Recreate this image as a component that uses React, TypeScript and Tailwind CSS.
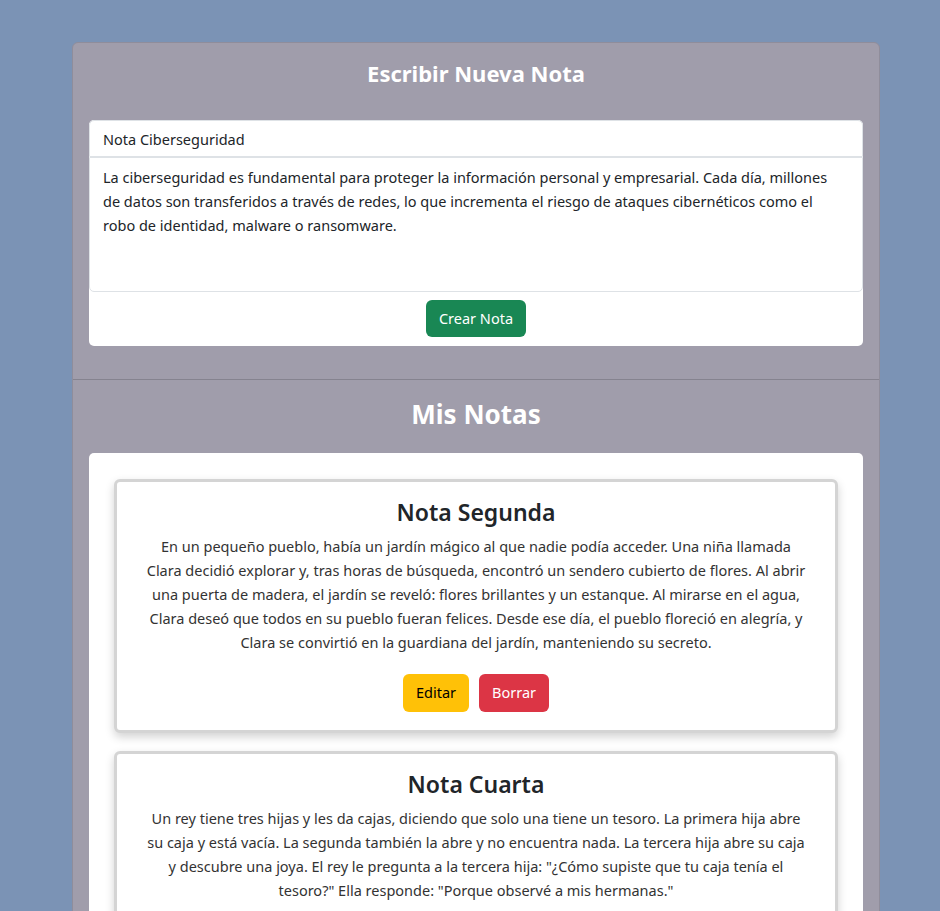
import { useState } from "react";

type Note = { id: number; title: string; lines: string[] };

const notes: Note[] = [
  {
    id: 2,
    title: "Nota Segunda",
    lines: [
      "En un pequeño pueblo, había un jardín mágico al que nadie podía acceder. Una niña llamada",
      "Clara decidió explorar y, tras horas de búsqueda, encontró un sendero cubierto de flores. Al abrir",
      "una puerta de madera, el jardín se reveló: flores brillantes y un estanque. Al mirarse en el agua,",
      "Clara deseó que todos en su pueblo fueran felices. Desde ese día, el pueblo floreció en alegría, y",
      "Clara se convirtió en la guardiana del jardín, manteniendo su secreto.",
    ],
  },
  {
    id: 4,
    title: "Nota Cuarta",
    lines: [
      "Un rey tiene tres hijas y les da cajas, diciendo que solo una tiene un tesoro. La primera hija abre",
      "su caja y está vacía. La segunda también la abre y no encuentra nada. La tercera hija abre su caja",
      'y descubre una joya. El rey le pregunta a la tercera hija: "¿Cómo supiste que tu caja tenía el',
      'tesoro?" Ella responde: "Porque observé a mis hermanas."',
    ],
  },
];

export default function App() {
  const [title, setTitle] = useState("Nota Ciberseguridad");
  const [body, setBody] = useState(
    "La ciberseguridad es fundamental para proteger la información personal y empresarial. Cada día, millones\nde datos son transferidos a través de redes, lo que incrementa el riesgo de ataques cibernéticos como el\nrobo de identidad, malware o ransomware."
  );

  return (
    <div className="min-h-screen bg-[#7b93b5] pt-[42px] font-['Noto_Sans',sans-serif] text-[#212529]">
      <div className="ml-[72px] w-[808px] rounded-t-[6px] border border-[#8f8d9b] bg-[#a09dab]">
        {/* Formulario */}
        <section className="px-4 pt-[14px] pb-[33px]">
          <h2 className="mb-[31px] text-center text-[22px] leading-8 font-bold text-white">
            Escribir Nueva Nota
          </h2>
          <div className="flex flex-col items-center rounded-[5px] bg-white pb-[9px]">
            <input
              value={title}
              onChange={(e) => setTitle(e.target.value)}
              className="h-[37px] w-full rounded-t-[5px] border border-[#dee2e6] px-[13px] text-[14.5px] outline-none"
            />
            <textarea
              value={body}
              wrap="off"
              onChange={(e) => setBody(e.target.value)}
              className="h-[135px] w-full resize-none overflow-hidden rounded-b-[5px] border border-[#dee2e6] px-[13px] py-[7px] text-[14.5px] leading-6 outline-none"
            />
            <button className="mt-[8px] h-[37px] rounded-[6px] bg-[#198754] px-[13px] text-[14.5px] text-white">
              Crear Nota
            </button>
          </div>
        </section>

        {/* Lista de notas */}
        <section className="border-t border-[#85838f] px-4 pt-[16px]">
          <h2 className="mb-[21px] text-center text-[26px] leading-9 font-bold text-white">
            Mis Notas
          </h2>
          <div className="flex flex-col gap-[18px] rounded-[5px] bg-white px-[25px] pt-[26px] pb-6">
            {notes.map((note) => (
              <div
                key={note.id}
                className="rounded-[6px] border-[3px] border-[#d4d4d4] bg-white px-3 pt-[11px] pb-[18px] text-center shadow-[0_4px_10px_rgba(0,0,0,0.18)]"
              >
                <h3 className="mb-[3px] text-[23px] leading-[38px] font-semibold">
                  {note.title}
                </h3>
                <p className="text-[14.5px] leading-6 text-[#333]">
                  {note.lines.map((line, i) => (
                    <span key={i} className="block whitespace-nowrap">
                      {line}
                    </span>
                  ))}
                </p>
                <div className="mt-[20px] flex justify-center gap-[10px]">
                  <button className="h-[38px] rounded-[6px] bg-[#ffc107] px-[13px] text-[14.5px] text-black">
                    Editar
                  </button>
                  <button className="h-[38px] rounded-[6px] bg-[#dc3545] px-[13px] text-[14.5px] text-white">
                    Borrar
                  </button>
                </div>
              </div>
            ))}
          </div>
        </section>
      </div>
    </div>
  );
}
